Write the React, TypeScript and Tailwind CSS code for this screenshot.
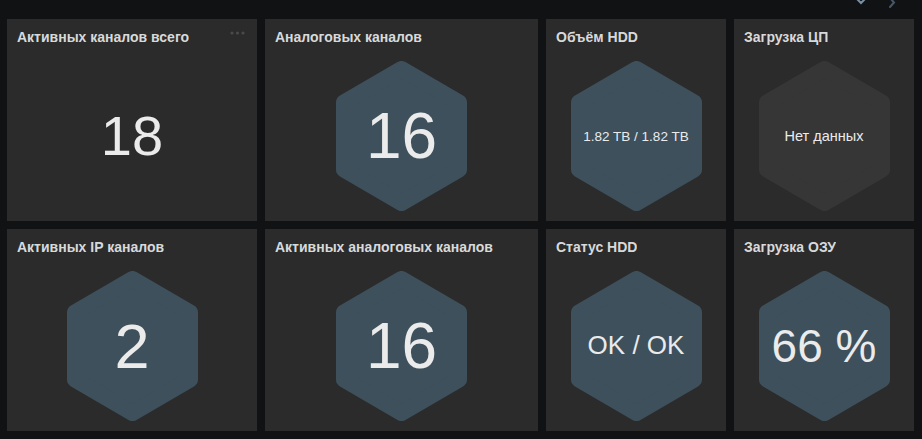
import React from "react";

type Panel = {
  title: string;
  value: string;
  size: string;
  hex?: "blue" | "grey";
  menu?: boolean;
};

const row1: Panel[] = [
  { title: "Активных каналов всего", value: "18", size: "text-[56px]", menu: true },
  { title: "Аналоговых каналов", value: "16", size: "text-[64px]", hex: "blue" },
  { title: "Объём HDD", value: "1.82 TB / 1.82 TB", size: "text-[13.5px]", hex: "blue" },
  { title: "Загрузка ЦП", value: "Нет данных", size: "text-[14.5px]", hex: "grey" },
];

const row2: Panel[] = [
  { title: "Активных IP каналов", value: "2", size: "text-[63px]", hex: "blue" },
  { title: "Активных аналоговых каналов", value: "16", size: "text-[64px]", hex: "blue" },
  { title: "Статус HDD", value: "OK / OK", size: "text-[26px]", hex: "blue" },
  { title: "Загрузка ОЗУ", value: "66 %", size: "text-[46px]", hex: "blue" },
];

function Hexagon({ color, children }: { color: string; children: React.ReactNode }) {
  return (
    <div className="relative w-[131px] h-[150px] flex items-center justify-center">
      <svg className="absolute inset-0" width="131" height="150" viewBox="0 0 131 150">
        <polygon
          points="65.5,8 123,41.5 123,108.5 65.5,142 8,108.5 8,41.5"
          fill={color}
          stroke={color}
          strokeWidth="16"
          strokeLinejoin="round"
        />
      </svg>
      <div className="relative">{children}</div>
    </div>
  );
}

function StatPanel({ panel }: { panel: Panel }) {
  const text = (
    <span className={`${panel.size} leading-none text-[#ebebeb] whitespace-nowrap`}>
      {panel.value}
    </span>
  );
  return (
    <div className="bg-[#2b2b2b] flex flex-col min-w-0">
      <div className="h-[32px] pt-[10px] px-[10px] flex items-start justify-between">
        <h3 className="text-[14px] leading-[16px] font-bold text-[#d8d9da] truncate">
          {panel.title}
        </h3>
        {panel.menu && (
          <svg width="15" height="4" viewBox="0 0 15 4" className="mt-[2px] mr-[2px]">
            <circle cx="2" cy="2" r="1.6" fill="#4a4a4a" />
            <circle cx="7.5" cy="2" r="1.6" fill="#4a4a4a" />
            <circle cx="13" cy="2" r="1.6" fill="#4a4a4a" />
          </svg>
        )}
      </div>
      <div className="flex-1 flex items-center justify-center">
        {panel.hex ? (
          <Hexagon color={panel.hex === "blue" ? "#3d505b" : "#363636"}>{text}</Hexagon>
        ) : (
          text
        )}
      </div>
    </div>
  );
}

export default function App() {
  return (
    <div
      className="w-[922px] h-[439px] bg-[#111214] overflow-hidden"
      style={{ fontFamily: '"Liberation Sans", Arial, sans-serif' }}
    >
      {/* top bar with row controls */}
      <div className="h-[19px] flex justify-end items-start pr-[26px] gap-[20px] overflow-hidden">
        <svg width="14" height="10" viewBox="0 0 14 10" className="-mt-[4px]">
          <path d="M2 2 L7 7 L12 2" fill="none" stroke="#7890a4" strokeWidth="2" strokeLinecap="round" />
        </svg>
        <svg width="8" height="12" viewBox="0 0 8 12" className="-mt-[3px]">
          <path d="M2 1 L6 5.5 L2 10" fill="none" stroke="#44586a" strokeWidth="2" strokeLinecap="round" />
        </svg>
      </div>

      <div className="pl-[7px] grid grid-cols-[250px_273px_180px_180px] grid-rows-[202px_202px] gap-[8px]">
        {row1.map((p) => (
          <StatPanel key={p.title} panel={p} />
        ))}
        {row2.map((p) => (
          <StatPanel key={p.title} panel={p} />
        ))}
      </div>
    </div>
  );
}
